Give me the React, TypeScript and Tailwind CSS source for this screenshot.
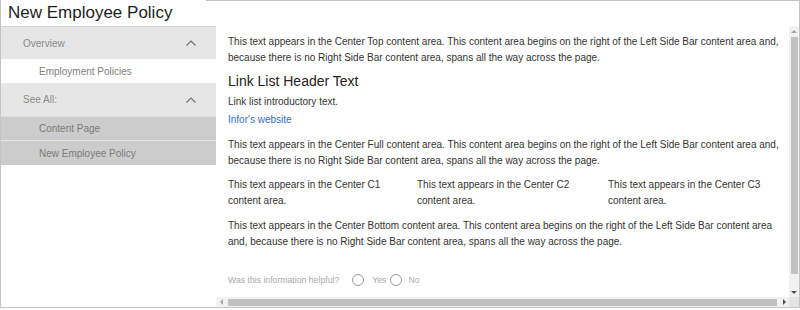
import React from "react";

const Chevron = () => (
  <svg width="12" height="8" viewBox="0 0 12 8" fill="none">
    <path d="M1.5 6.5 L6 2 L10.5 6.5" stroke="#707070" strokeWidth="1.2" />
  </svg>
);

const Radio = () => (
  <span className="inline-block w-[12px] h-[12px] rounded-full border border-[#9a9a9a] bg-white" />
);

export default function App() {
  return (
    <div className="w-[800px] h-[308px] bg-white border-l border-r border-b border-[#c4c4c4] flex flex-col font-['Liberation_Sans',Arial,sans-serif]">
      <div className="h-[26px] flex shrink-0">
        <div className="w-[205px] pl-[7px] flex items-center text-[17px] text-[#1e1e1e] whitespace-nowrap">
          New Employee Policy
        </div>
        <div className="flex-1 border-t border-[#c4c4c4]" />
      </div>
      <div className="flex flex-1 min-h-0">
        <div className="w-[215px] shrink-0 flex flex-col border-t border-[#d2d2d2] text-[10px]">
          <div className="h-[32px] bg-[#e6e6e6] flex items-center justify-between pl-[22px] pr-[19px] text-[#8a8a8a]">
            <span>Overview</span>
            <Chevron />
          </div>
          <div className="h-[24px] bg-white flex items-center pl-[38px] text-[#808080]">
            Employment Policies
          </div>
          <div className="h-[33px] bg-[#e6e6e6] flex items-center justify-between pl-[22px] pr-[19px] text-[#8a8a8a]">
            <span>See All:</span>
            <Chevron />
          </div>
          <div className="h-[24px] bg-[#cccccc] border-t border-[#dedede] flex items-center pl-[38px] text-[#7a7a7a]">
            Content Page
          </div>
          <div className="h-[25px] bg-[#cccccc] border-t border-[#e2e2e2] flex items-center pl-[38px] text-[#7a7a7a]">
            New Employee Policy
          </div>
          <div className="flex-1" />
        </div>
        <div className="flex-1 flex flex-col min-w-0">
          <div className="flex flex-1 min-h-0">
            <div className="flex-1 min-w-0 overflow-hidden pl-[12px] pt-[8px] text-[#333] text-[10px] leading-[16px]">
              <div className="w-[555px]">
                <p>
                  This text appears in the Center Top content area. This content area begins on the right of the Left Side Bar content area and, because there is no Right Side Bar content area, spans all the way across the page.
                </p>
                <h2 className="mt-[3px] text-[14px] leading-[24px] text-[#222]">Link List Header Text</h2>
                <p className="mt-[1px]">Link list introductory text.</p>
                <p className="mt-[2px] text-[#3370c4]">Infor's website</p>
                <p className="mt-[9px]">
                  This text appears in the Center Full content area. This content area begins on the right of the Left Side Bar content area and, because there is no Right Side Bar content area, spans all the way across the page.
                </p>
                <div className="mt-[8px] flex w-[580px]">
                  <div className="w-[189px] pr-[15px]">This text appears in the Center C1 content area.</div>
                  <div className="w-[191px] pr-[15px]">This text appears in the Center C2 content area.</div>
                  <div className="w-[190px] pr-[15px]">This text appears in the Center C3 content area.</div>
                </div>
                <p className="mt-[9px]">
                  This text appears in the Center Bottom content area. This content area begins on the right of the Left Side Bar content area and, because there is no Right Side Bar content area, spans all the way across the page.
                </p>
                <div className="mt-[22px] flex items-center text-[8.7px] text-[#a8a8a8] whitespace-nowrap">
                  <span>Was this information helpful?</span>
                  <span className="ml-[13px] flex items-center"><Radio /></span>
                  <span className="ml-[8px]">Yes</span>
                  <span className="ml-[4px] flex items-center"><Radio /></span>
                  <span className="ml-[6px]">No</span>
                </div>
              </div>
            </div>
            <div className="w-[10px] shrink-0 bg-[#f1f1f1] flex flex-col items-center">
              <div className="h-[10px] flex items-center justify-center">
                <div className="w-0 h-0 border-l-[3px] border-r-[3px] border-b-[3px] border-l-transparent border-r-transparent border-b-[#a3a3a3]" />
              </div>
              <div className="mt-[1px] h-[237px] w-[7px] bg-[#c1c1c1]" />
              <div className="flex-1" />
              <div className="h-[10px] flex items-center justify-center">
                <div className="w-0 h-0 border-l-[3px] border-r-[3px] border-t-[3px] border-l-transparent border-r-transparent border-t-[#505050]" />
              </div>
            </div>
          </div>
          <div className="h-[10px] shrink-0 flex">
            <div className="flex-1 bg-[#f1f1f1] flex items-center">
              <div className="w-[10px] flex items-center justify-center">
                <div className="w-0 h-0 border-t-[3px] border-b-[3px] border-r-[3px] border-t-transparent border-b-transparent border-r-[#a3a3a3]" />
              </div>
              <div className="ml-[2px] h-[7px] w-[549px] bg-[#c1c1c1]" />
              <div className="flex-1" />
              <div className="w-[10px] flex items-center justify-center">
                <div className="w-0 h-0 border-t-[3px] border-b-[3px] border-l-[3px] border-t-transparent border-b-transparent border-l-[#505050]" />
              </div>
            </div>
            <div className="w-[10px] bg-[#e4e4e4]" />
          </div>
        </div>
      </div>
    </div>
  );
}
